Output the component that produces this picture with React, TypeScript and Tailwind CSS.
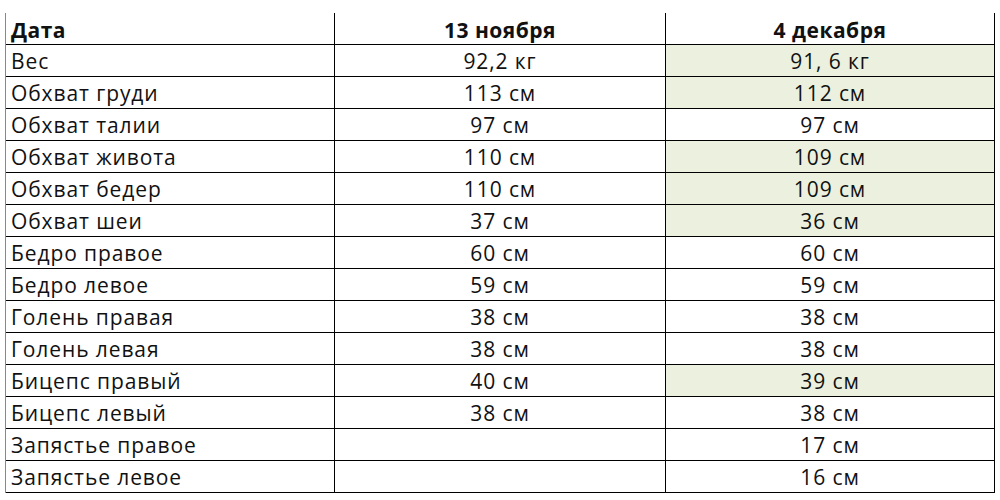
import React from "react";

const rows: [string, string, string, boolean][] = [
  ["Вес", "92,2 кг", "91, 6 кг", true],
  ["Обхват груди", "113 см", "112 см", true],
  ["Обхват талии", "97 см", "97 см", false],
  ["Обхват живота", "110 см", "109 см", true],
  ["Обхват бедер", "110 см", "109 см", true],
  ["Обхват шеи", "37 см", "36 см", true],
  ["Бедро правое", "60 см", "60 см", false],
  ["Бедро левое", "59 см", "59 см", false],
  ["Голень правая", "38 см", "38 см", false],
  ["Голень левая", "38 см", "38 см", false],
  ["Бицепс правый", "40 см", "39 см", true],
  ["Бицепс левый", "38 см", "38 см", false],
  ["Запястье правое", "", "17 см", false],
  ["Запястье левое", "", "16 см", false],
];

export default function App() {
  return (
    <div
      className="w-[1000px] h-[500px] bg-white text-[#111] overflow-hidden"
      style={{ fontFamily: "'Open Sans', sans-serif" }}
    >
      <div className="ml-[5px] mt-[13px] w-[990px] border-l border-l-[#888]">
        <div className="grid grid-cols-[329px_331px_329px] h-[32px] border-b border-black text-[21px] font-bold tracking-[0.5px]">
          <div className="pl-[5px] flex items-end pb-[3px] leading-none border-r border-black">Дата</div>
          <div className="flex items-end justify-center pb-[3px] leading-none border-r border-black">13 ноября</div>
          <div className="flex items-end justify-center pb-[3px] leading-none border-r border-black">4 декабря</div>
        </div>
        {rows.map(([name, a, b, green]) => (
          <div
            key={name}
            className="grid grid-cols-[329px_331px_329px] h-[32px] border-b border-black text-[21px] tracking-[0.9px]"
          >
            <div className="pl-[5px] flex items-end pb-[4px] leading-none border-r border-black">{name}</div>
            <div className="flex items-end justify-center pb-[4px] leading-none border-r border-black">{a}</div>
            <div
              className={
                "flex items-end justify-center pb-[4px] leading-none border-r border-black " +
                (green ? "bg-[#ebf1de]" : "bg-white")
              }
            >
              {b}
            </div>
          </div>
        ))}
      </div>
    </div>
  );
}
